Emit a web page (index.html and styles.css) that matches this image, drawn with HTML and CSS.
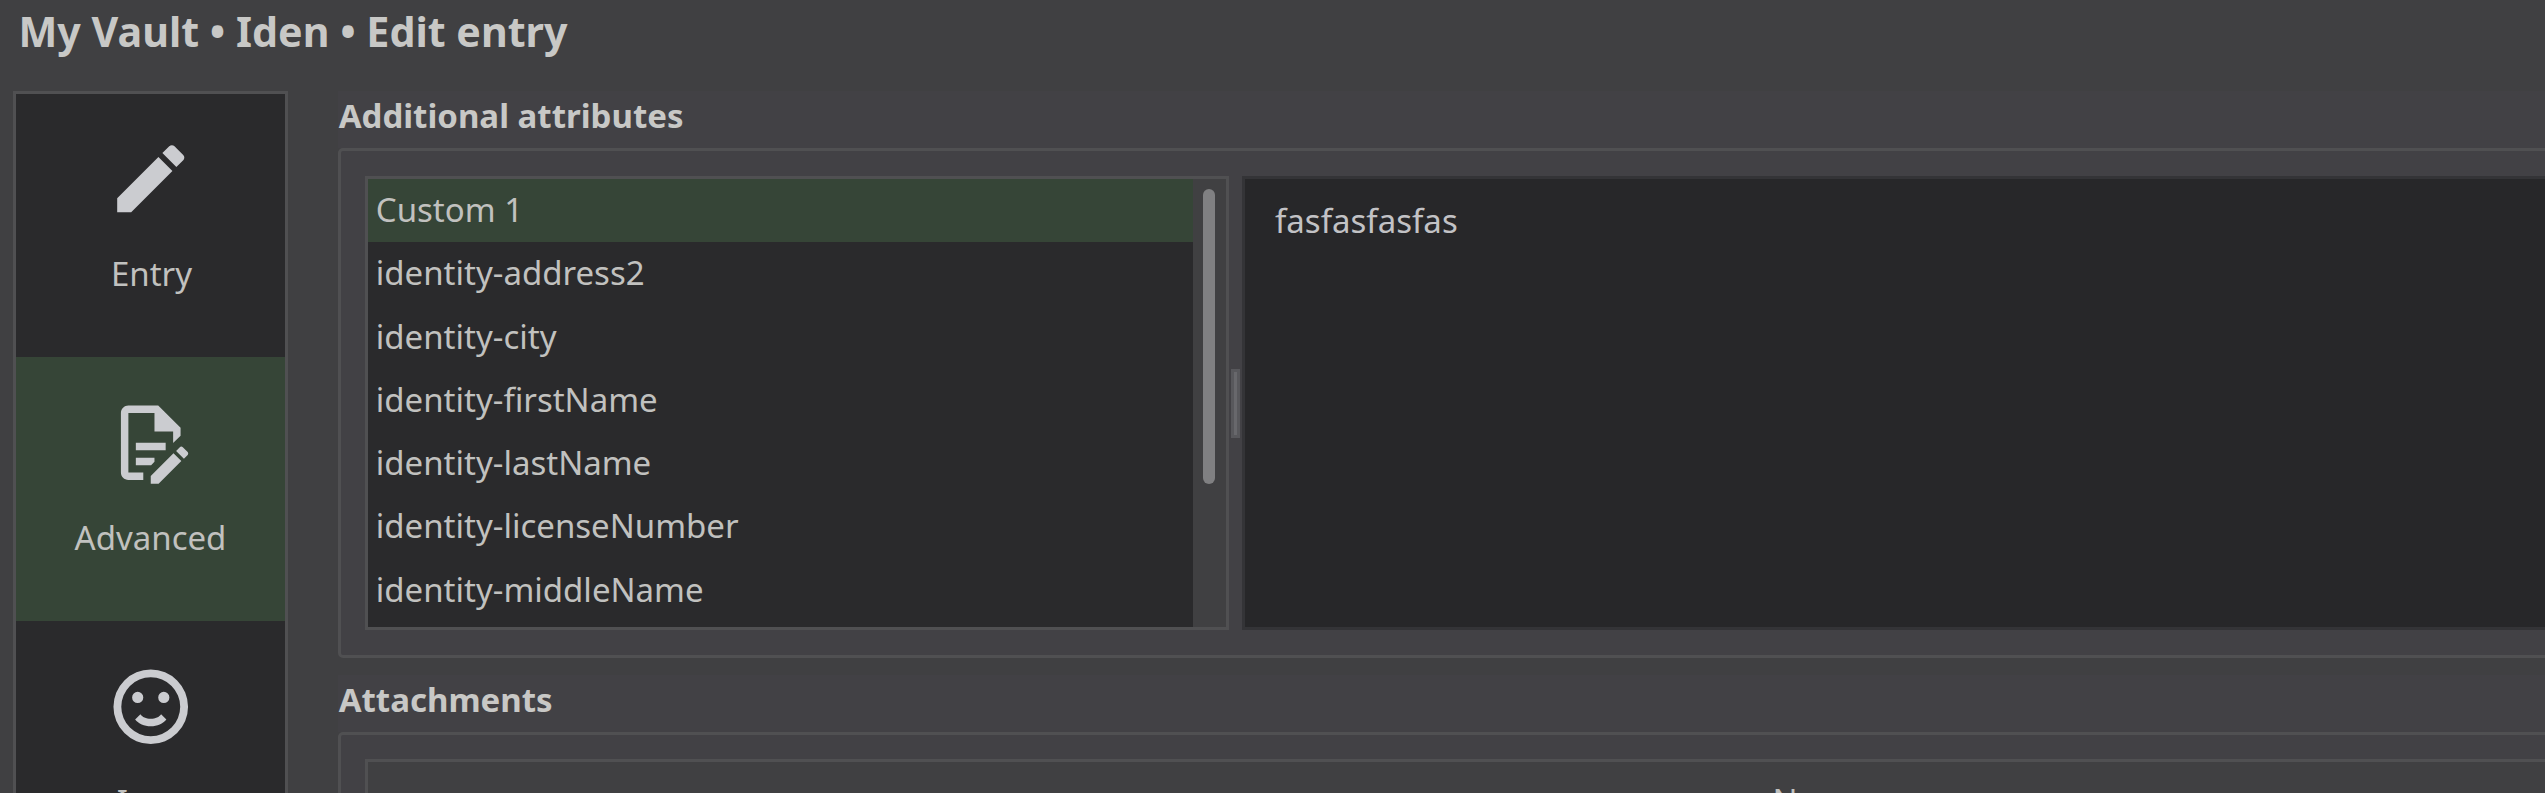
FILE: index.html
```
<!DOCTYPE html>
<html lang="en">
<head>
<meta charset="utf-8">
<title>My Vault • Iden • Edit entry</title>
<link rel="stylesheet" href="styles.css">
</head>
<body>
<h1 class="title">My Vault • Iden • Edit entry</h1>
<div class="layout">
  <nav class="sidebar">
    <a class="category category-first">
      <svg class="category-icon" viewBox="0 0 24 24"><path d="M20.71 7.04c.39-.39.39-1.04 0-1.41l-2.34-2.34c-.37-.39-1.02-.39-1.41 0l-1.84 1.83 3.75 3.75M3 17.25V21h3.75L17.81 9.93l-3.75-3.75L3 17.25z"/></svg>
      <span class="category-label">Entry</span>
    </a>
    <a class="category category-active">
      <svg class="category-icon" viewBox="0 0 24 24"><path d="M8 12h8v2H8v-2m2 8H6V4h7v5h5v3.1l2-2V8l-6-6H6c-1.1 0-2 .9-2 2v16c0 1.1.9 2 2 2h4v-2m-2-2h4.1l.9-.9V16H8v2m12.2-5c.1 0 .3.1.4.2l1.3 1.3c.2.2.2.6 0 .8l-1 1-2.1-2.1 1-1c.1-.1.2-.2.4-.2m0 3.9L14.1 23H12v-2.1l6.1-6.1 2.1 2.1z"/></svg>
      <span class="category-label">Advanced</span>
    </a>
    <a class="category">
      <svg class="category-icon" viewBox="0 0 24 24"><path d="M12 2a10 10 0 1 0 0 20 10 10 0 0 0 0-20m0 2.1a7.9 7.9 0 1 1 0 15.8 7.9 7.9 0 0 1 0-15.8M8.5 8a1.5 1.5 0 1 0 0 3 1.5 1.5 0 0 0 0-3m7 0a1.5 1.5 0 1 0 0 3 1.5 1.5 0 0 0 0-3M12 17.23c-1.75 0-3.29-.73-4.19-1.81L9.23 14c.45.72 1.52 1.23 2.77 1.23s2.32-.51 2.77-1.23l1.42 1.42c-.9 1.08-2.44 1.81-4.19 1.81z"/></svg>
      <span class="category-label">Icon</span>
    </a>
  </nav>
  <main class="content">
    <h2 class="group-title">Additional attributes</h2>
    <section class="group group-attributes">
      <div class="list">
        <ul class="rows">
          <li class="row row-selected">Custom 1</li>
          <li class="row">identity-address2</li>
          <li class="row">identity-city</li>
          <li class="row">identity-firstName</li>
          <li class="row">identity-lastName</li>
          <li class="row">identity-licenseNumber</li>
          <li class="row">identity-middleName</li>
        </ul>
        <div class="scrollbar"><div class="thumb"></div></div>
      </div>
      <div class="splitter"><div class="grip"></div></div>
      <div class="editor">fasfasfasfas</div>
    </section>
    <h2 class="group-title">Attachments</h2>
    <section class="group group-attachments">
      <div class="table"><div class="table-head">Name</div></div>
    </section>
  </main>
</div>
</body>
</html>
```

FILE: styles.css
```
* { box-sizing: border-box; }

body {
  display: flex;
  flex-direction: column;
  height: 793px;
  margin: 0;
  overflow: hidden;
  background: #404042;
  color: #c1c1bf;
  font: 33px/45px "Noto Sans", sans-serif;
}

.title {
  flex: none;
  height: 91px;
  margin: 0;
  padding-left: 18.5px;
  color: #c8c8c6;
  font-size: 41.2px;
  font-weight: 700;
  line-height: 62px;
}

.layout {
  display: flex;
  flex: 1;
  min-height: 0;
  padding-left: 13px;
}

.sidebar {
  flex: none;
  width: 275px;
  margin-right: 50px;
  overflow: hidden;
  border: 3px solid #505052;
  border-bottom: 0;
  background: #2a2a2c;
}

.category {
  display: flex;
  flex-direction: column;
  align-items: center;
  height: 264px;
  padding-top: 41px;
}

.category-first {
  height: 263px;
  padding-top: 40px;
}

.category-first .category-label { padding-left: 2px; }

.category-active { background: #364537; }

.category-icon {
  flex: none;
  width: 89.5px;
  height: 89.5px;
  margin-bottom: 27px;
  fill: #cbccd0;
}

.content {
  flex: none;
  width: 3100px;
}

.group-title {
  height: 57px;
  margin: 0;
  padding-left: 0.7px;
  background: #424145;
  color: #c8c8c6;
  font-size: 33px;
  font-weight: 700;
  line-height: 49px;
}

.group {
  display: flex;
  border: 3px solid #505052;
  border-radius: 5px;
  background: #424145;
}

.group-attributes {
  height: 510px;
  margin-bottom: 17px;
  padding: 25px 24px;
}

.group-attachments {
  height: 300px;
  padding: 24px;
}

.list {
  display: flex;
  width: 864px;
  border: 3px solid #505052;
  background: #2a2a2c;
}

.rows {
  flex: 1;
  margin: 0;
  padding: 0;
  list-style: none;
}

.row {
  height: 63.3px;
  padding-left: 7.8px;
  line-height: 62px;
}

.row-selected { background: #364537; }

.scrollbar {
  width: 33px;
  padding: 10px 10px 0;
  background: #404042;
}

.thumb {
  width: 12px;
  height: 295px;
  border-radius: 6px;
  background: #808082;
}

.splitter {
  display: flex;
  align-items: center;
  width: 13px;
  padding-left: 2px;
}

.grip {
  width: 9px;
  height: 69px;
  border: 3px solid #58585c;
  background: #68686c;
}

.editor {
  flex: 1;
  padding: 19px 30px;
  border: 3px solid #343437;
  background: #272729;
  color: #c2c2c5;
}

.table {
  width: 2908px;
  border: 3px solid #505052;
  background: #404042;
}

.table-head {
  line-height: 78px;
  text-align: center;
}
```
